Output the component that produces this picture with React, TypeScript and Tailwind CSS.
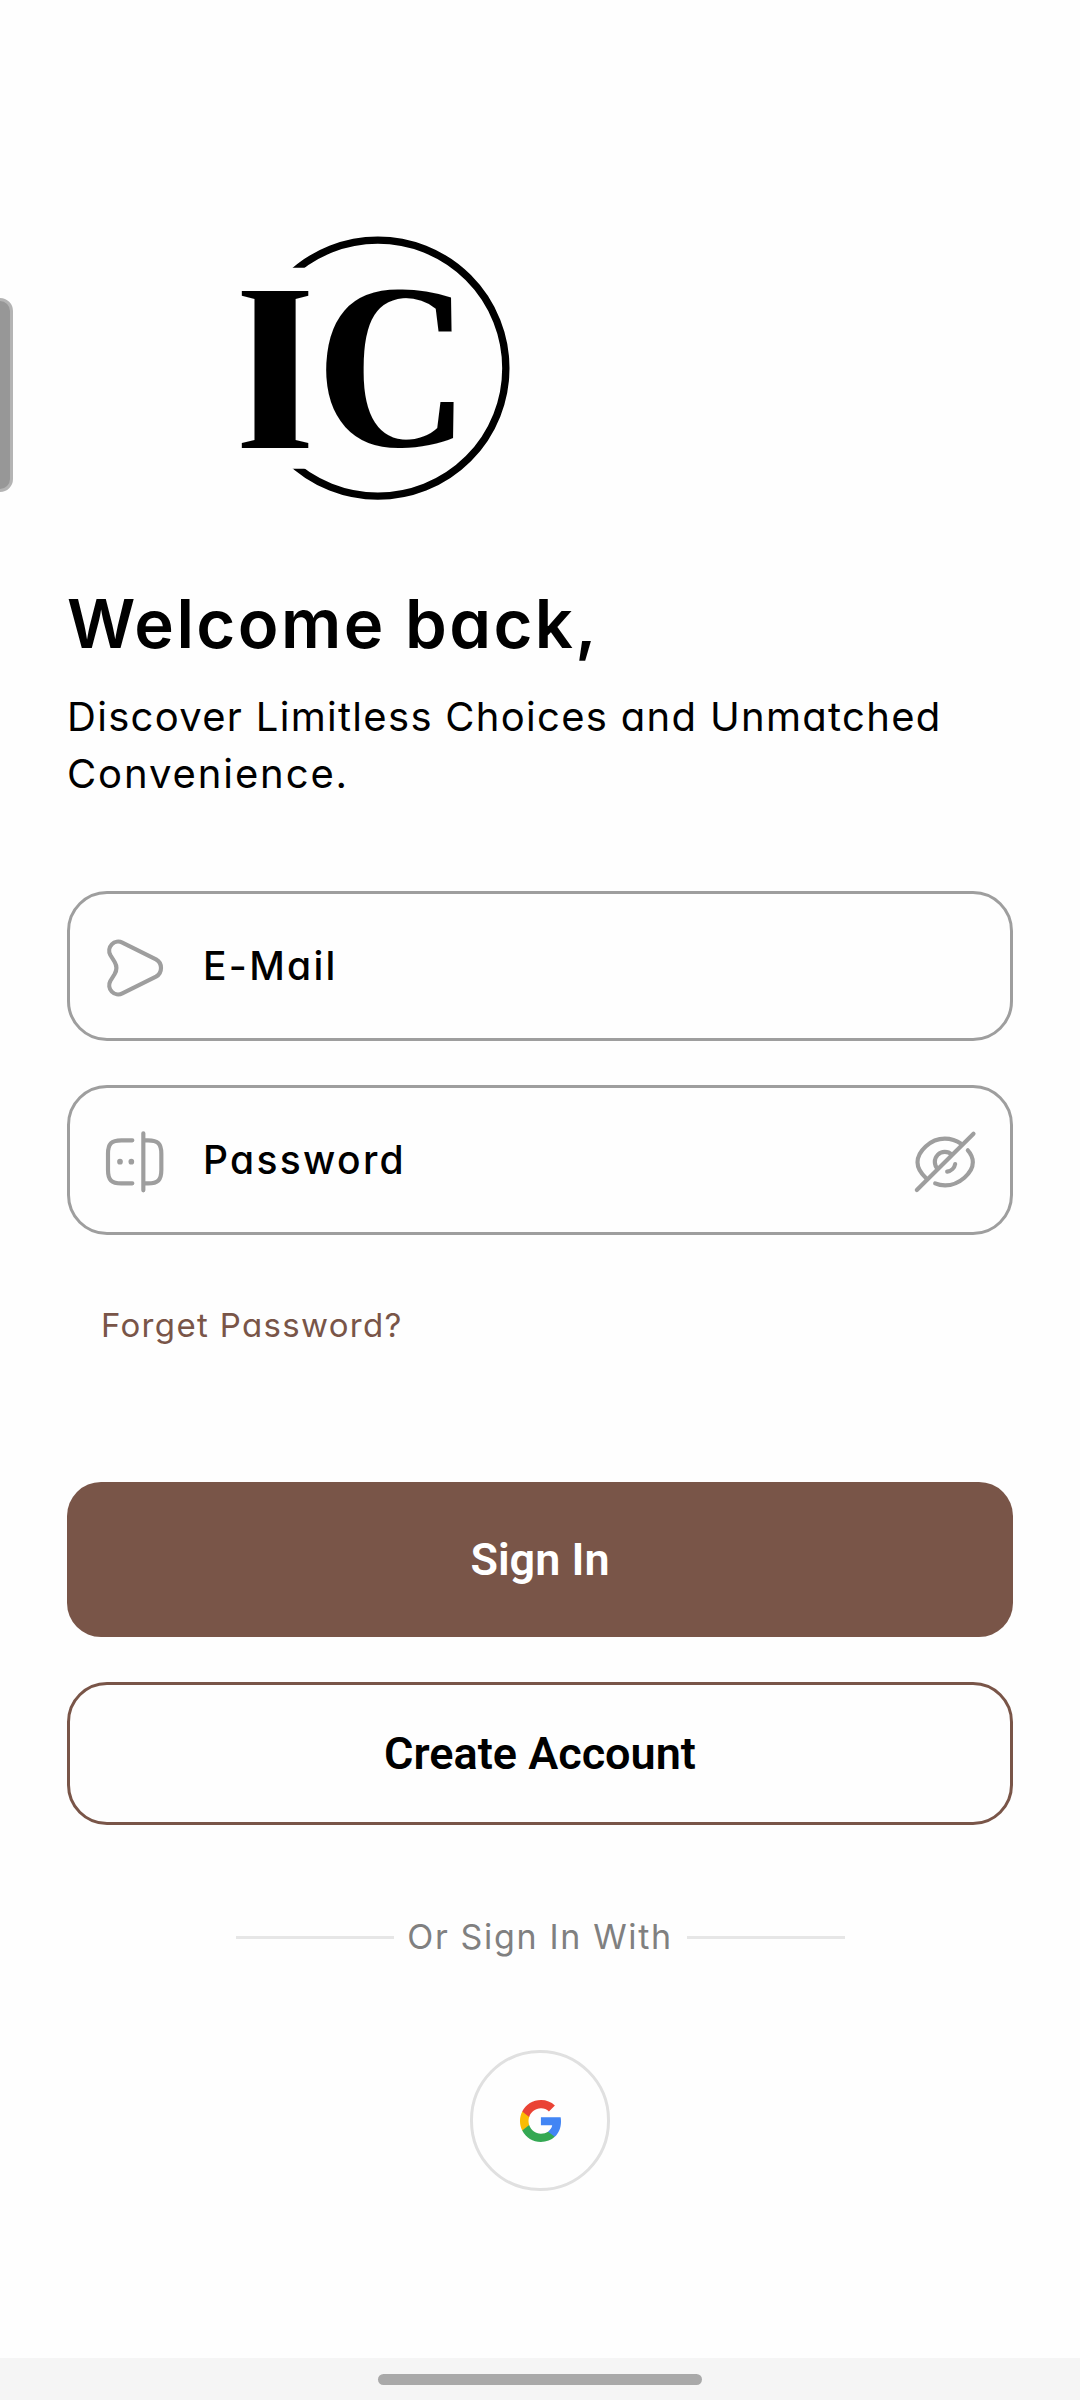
import type { ReactNode } from 'react';

function Logo() {
  return (
    <svg className="ml-[153px] h-[300px] w-[310px]" viewBox="0 0 930 900" aria-label="IC">
      <defs>
        <clipPath id="ring">
          <path d="M0 0H930V900H0V746H450V143H0Z" />
        </clipPath>
        <filter id="widenI" x="-50%" y="-10%" width="200%" height="120%">
          <feMorphology operator="erode" radius="0 7" />
          <feMorphology operator="dilate" radius="26 0" />
        </filter>
        <filter id="widenC" x="-20%" y="-10%" width="140%" height="120%">
          <feMorphology operator="erode" radius="0 6" />
          <feMorphology operator="dilate" radius="7 0" />
        </filter>
      </defs>
      <circle cx="473.5" cy="444.5" r="384" fill="none" stroke="#000" strokeWidth="22" clipPath="url(#ring)" />
      <g fontFamily="Liberation Serif" fontWeight="700" textAnchor="middle">
        <g filter="url(#widenI)">
          <text transform="translate(165.5 689) scale(.61 1)" fontSize="741">I</text>
        </g>
        <g filter="url(#widenC)">
          <text transform="translate(518 684) scale(.86 1)" fontSize="722">C</text>
        </g>
      </g>
    </svg>
  );
}

function SendIcon() {
  return (
    <svg className="size-[68px]" viewBox="0 0 204 204" fill="none" stroke="#9e9e9e" strokeWidth="12.5" strokeLinejoin="round">
      <path d="M64 26L165 76C185 87 185 117 165 128L64 178A27 27 0 0 1 28 141L41 120C48 108 48 96 41 84L28 63A27 27 0 0 1 64 26Z" />
    </svg>
  );
}

function PasswordIcon() {
  return (
    <svg className="size-[68px]" viewBox="153 173 204 204" fill="none" stroke="#9e9e9e" strokeWidth="12.5" strokeLinecap="round">
      <path d="M247 210H214C184 210 174 220 174 250V299C174 329 184 339 214 339H247M280 210H294C324 210 334 220 334 250V299C334 329 324 339 294 339H280M280 189V360" />
      <circle cx="210" cy="274" r="8.5" fill="#9e9e9e" stroke="none" />
      <circle cx="244" cy="274" r="8.5" fill="#9e9e9e" stroke="none" />
    </svg>
  );
}

function EyeSlashIcon() {
  return (
    <svg className="size-[68px]" viewBox="92.5 172 204 204" fill="none" stroke="#9e9e9e" strokeWidth="12.5" strokeLinecap="round">
      <path d="M244 220C228 209 211 204 194 204C150 204 112 243 112 275C112 292 122 308 138 323" />
      <path d="M263 239C273 250 278 263 278 275C278 306 238 344 195 344C185 344 174 342 165 338" />
      <path d="M215 252A30 30 0 0 0 173 295M225 280C223 292 213 301 201 303M280 189L110 358" />
    </svg>
  );
}

function GoogleIcon() {
  return (
    <svg className="h-[42px] w-[41px]" viewBox="0 0 533.5 544.3">
      <path fill="#4285f4" d="M533.5 278.4c0-18.5-1.5-37.1-4.7-55.3H272.1v104.8h147c-6.1 33.8-25.7 63.7-54.4 82.7v68h87.7c51.5-47.4 81.1-117.4 81.1-200.2z" />
      <path fill="#34a853" d="M272.1 544.3c73.4 0 135.3-24.1 180.4-65.7l-87.7-68c-24.4 16.6-55.9 26-92.6 26-71 0-131.2-47.9-152.8-112.3H28.9v70.1c46.2 91.9 140.3 149.9 243.2 149.9z" />
      <path fill="#fbbc04" d="M119.3 324.3c-11.4-33.8-11.4-70.4 0-104.2V150H28.9c-38.6 76.9-38.6 167.5 0 244.4l90.4-70.1z" />
      <path fill="#ea4335" d="M272.1 107.7c38.8-.6 76.3 14 104.4 40.8l77.7-77.7C405 24.6 339.7-.8 272.1 0 169.2 0 75.1 58 28.9 150l90.4 70.1c21.5-64.5 81.8-112.4 152.8-112.4z" />
    </svg>
  );
}

function Field({ icon, children, trailing }: { icon: ReactNode; children: ReactNode; trailing?: ReactNode }) {
  return (
    <div className="flex h-[150px] items-center rounded-[40px] border-[3px] border-[#9e9e9e] pt-[3px] pr-[31px] pl-[31px]">
      {icon}
      <div className="ml-[34px] flex-1 pb-[3px] text-[39px] font-medium tracking-[2.3px]">{children}</div>
      {trailing}
    </div>
  );
}

export default function App() {
  return (
    <div className="relative flex h-[2400px] w-[1080px] flex-col overflow-hidden bg-[#fefefe] font-['Inter',sans-serif] text-black [font-feature-settings:'cv11']">
      <div className="absolute top-[298px] left-[-14px] h-[194px] w-[27px] rounded-[13px] border-[3px] border-[#b4b4b4] bg-[#979797]" />
      <main className="flex flex-col px-[67px] pt-[220px]">
        <Logo />
        <h1 className="mt-16 text-[67px] leading-[80px] font-semibold tracking-[2.4px] whitespace-nowrap">Welcome back,</h1>
        <p className="mt-6 text-[40px] leading-[57px] whitespace-nowrap">
          <span className="tracking-[1.3px]">Discover Limitless Choices and Unmatched</span>
          <br />
          <span className="tracking-[1.9px]">Convenience.</span>
        </p>
        <div className="mt-[89px] flex flex-col gap-11">
          <Field icon={<SendIcon />}>E-Mail</Field>
          <Field icon={<PasswordIcon />} trailing={<EyeSlashIcon />}>
            Password
          </Field>
        </div>
        <a className="mt-[65px] ml-[34px] text-[33px] leading-[50px] tracking-[1.33px] text-[#795548]">Forget Password?</a>
        <button className="mt-[132px] h-[155px] rounded-[34px] bg-[#795548] font-['Roboto',sans-serif] text-[45px] font-semibold text-white">
          Sign In
        </button>
        <button className="mt-[45px] h-[143px] rounded-[40px] border-[3px] border-[#795548] font-['Roboto',sans-serif] text-[45px] font-semibold">
          Create Account
        </button>
        <div className="mt-[87px] flex items-center justify-center text-[34px] leading-[50px] text-[#808080]">
          <div className="h-[3px] w-[158px] bg-[#e6e6e6]" />
          <div className="w-[293px] text-center tracking-[1.65px] whitespace-nowrap">Or Sign In With</div>
          <div className="h-[3px] w-[158px] bg-[#e6e6e6]" />
        </div>
        <button className="mt-[88px] flex h-[141px] w-[140px] items-center justify-center self-center rounded-full border-[3px] border-[#e0e0e0]">
          <GoogleIcon />
        </button>
      </main>
      <footer className="mt-auto flex h-[42px] justify-center bg-[#f5f5f5] pt-4">
        <div className="h-[11px] w-[324px] rounded-full bg-[#a9a9a9]" />
      </footer>
    </div>
  );
}
